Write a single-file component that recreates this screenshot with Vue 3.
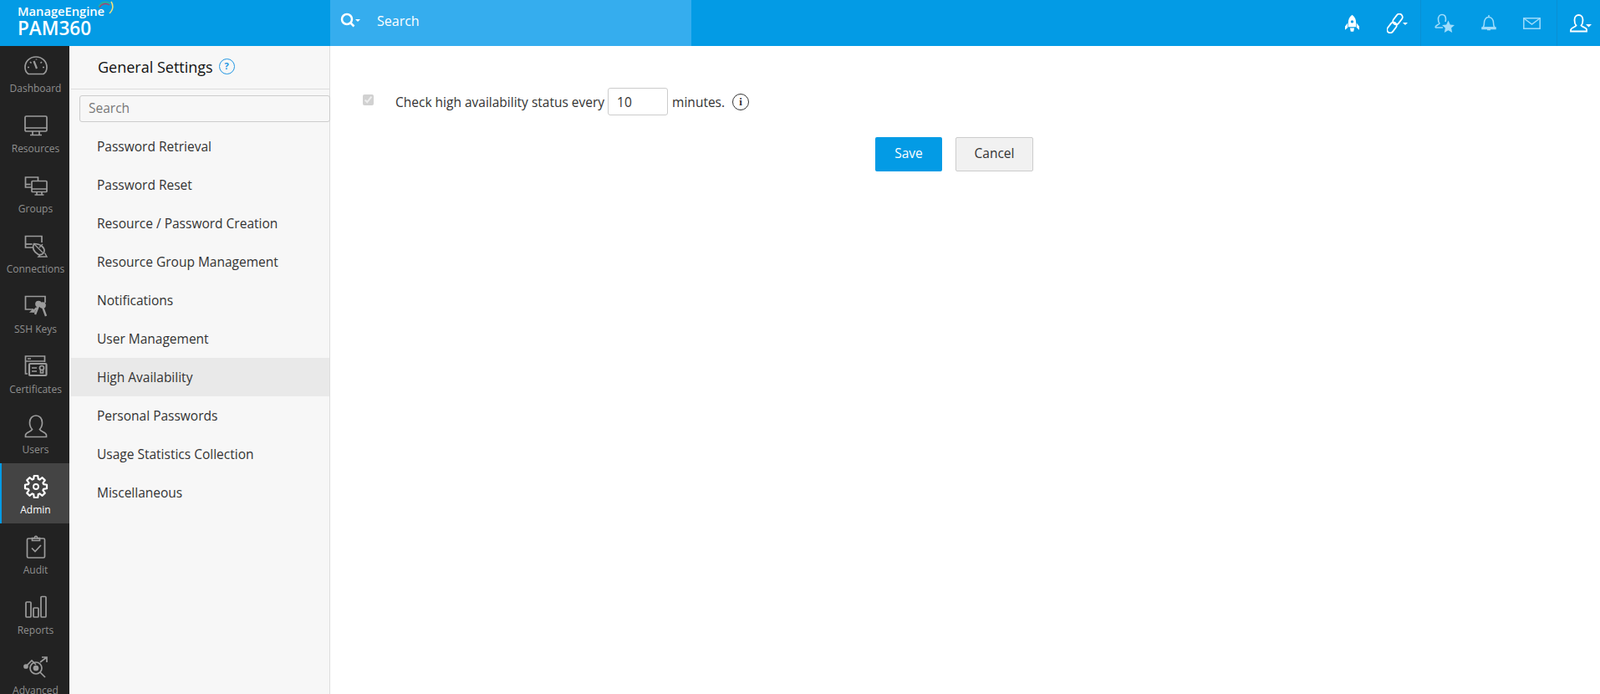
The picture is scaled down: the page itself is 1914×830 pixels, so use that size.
<script setup>
const settings = ['Password Retrieval','Password Reset','Resource / Password Creation','Resource Group Management','Notifications','User Management','High Availability','Personal Passwords','Usage Statistics Collection','Miscellaneous']
const nav = [
 {k:'dashboard',l:'Dashboard'},{k:'resources',l:'Resources'},{k:'groups',l:'Groups'},{k:'connections',l:'Connections'},{k:'ssh',l:'SSH Keys'},{k:'certs',l:'Certificates'},{k:'users',l:'Users'},{k:'admin',l:'Admin',active:true},{k:'audit',l:'Audit'},{k:'reports',l:'Reports'},{k:'advanced',l:'Advanced'}
]
// gear outline: eight teeth around the hub
const gearPath = (() => {
  const pts = []
  const step = Math.PI / 4
  for (let i = 0; i < 8; i++) {
    const a = i * step - Math.PI / 2
    const add = (r, d) => pts.push([(15 + r * Math.cos(a + d)).toFixed(2), (15 + r * Math.sin(a + d)).toFixed(2)].join(' '))
    add(9.5, -0.3); add(13.2, -0.17); add(13.2, 0.17); add(9.5, 0.3)
  }
  return 'M' + pts.join('L') + 'Z'
})()
</script>

<template>
  <div class="app">
    <header class="top">
      <div class="brand">
        <div class="me">ManageEngine<svg class="arc" viewBox="0 0 20 20" width="20" height="20" fill="none"><path d="M2 8C5 2 11 1 16 4" stroke="#35b58a" stroke-width="1.400"/><path d="M3 9C6 4 11 3.500 15 6" stroke="#b9405f" stroke-width="1.300"/><path d="M17 2C20 7 19 12 15 16" stroke="#f6e27a" stroke-width="1.500"/></svg></div>
        <div class="pam">PAM360</div>
      </div>
      <div class="tsearch">
        <svg width="24" height="20" viewBox="0 0 24 20" fill="none" stroke="#fff" stroke-width="2.500"><circle cx="8" cy="8" r="6"/><path d="M12.500 12.500l4 4"/><path d="M18 8h6l-3 3z" fill="#fff" stroke="none"/></svg>
        <span>Search</span>
      </div>
      <div class="ticons">
        <div class="tgroup g1">
          <svg width="17" height="24" viewBox="0 0 20 24" fill="#fff"><path d="M10 0C14 3 15.500 7 15.500 11v6h-11v-6C4.500 7 6 3 10 0z"/><path d="M3.800 11.500L0 16v5l3.800-3zM16.200 11.500L20 16v5l-3.800-3z"/><path d="M7 18.500h6l-1 5H8z"/><circle cx="10" cy="9.500" r="2" fill="#039be5"/></svg>
          <svg width="25" height="24" viewBox="0 0 25 24" fill="none" stroke="#fff" stroke-width="1.800"><rect x="-3.800" y="-7" width="7.600" height="14" rx="3.800" transform="translate(6 17) rotate(38)"/><rect x="-3.800" y="-7" width="7.600" height="14" rx="3.800" transform="translate(13 7) rotate(38)"/><path d="M19 11h6l-3 3z" fill="#fff" stroke="none"/></svg>
        </div>
        <div class="tgroup g2">
          <svg width="24" height="24" viewBox="0 0 24 24" fill="none" stroke="#9fdcfb" stroke-width="1.600"><path d="M1 17c0-3 4-3 5-5-1-1-1.500-3-1.500-5C4.500 3.500 6.500 1.500 9 1.500s4.500 2 4.500 5.500c0 1-.2 2-.5 3M1 17h9"/><path d="M16.500 8.500l2.300 5 5.200.6-3.900 3.500 1.100 5.300-4.700-2.700-4.700 2.700 1.100-5.300-3.900-3.500 5.200-.6z" fill="#9fdcfb" stroke="none"/></svg>
          <svg width="18" height="21" viewBox="0 0 18 21" fill="none" stroke="#9fdcfb" stroke-width="1.500"><path d="M2 16c1.500-2 1.500-3.500 1.500-6S5 3.500 9 3.500s5.500 4 5.500 6.500 0 4 1.500 6z"/><path d="M1 16h16v1.500H1zM7 18.500h4M9 1v2.500"/></svg>
          <svg width="21" height="14" viewBox="0 0 21 14" fill="none" stroke="#9fdcfb" stroke-width="1.500"><rect x=".8" y=".8" width="19.400" height="12.400"/><path d="M1 1l9.500 7L20 1"/></svg>
        </div>
        <div class="tgroup g3">
          <svg width="26" height="22" viewBox="0 0 26 22" fill="none" stroke="#fff" stroke-width="1.800"><path d="M1 20.500v-1.500c0-3 5-3 6.500-5.500C6 12 5.500 9.500 5.500 7 5.500 3.500 7.500 1 10.500 1s5 2.500 5 6c0 2.500-.5 5-2 6.500 1.500 2 6 2.500 6.500 4.500v2.500z"/><path d="M19 12h7l-3.500 3.500z" fill="#fff" stroke="none"/></svg>
        </div>
      </div>
    </header>

    <div class="main">
      <nav class="side">
        <div class="navlist">
          <div v-for="n in nav" :key="n.k" class="nitem" :class="{active:n.active}">
            <svg class="nicon" width="30" height="30" viewBox="0 0 30 30" fill="none" stroke="currentColor" stroke-width="1.700">
              <g v-if="n.k==='dashboard'"><path d="M6 25.500C3 23.500 2 20 2 17.500 2 10.500 7.500 5 15 5s13 5.500 13 12.500c0 3-1 6-4 8z"/><path d="M12.500 10l3.500 9" stroke-width="2.200"/><path d="M5 17.500h2M23 17.500h2M8 11l1.500 1.500M22 11l-1.500 1.500M15.500 7.500v1"/></g>
              <g v-else-if="n.k==='resources'"><rect x="2" y="4" width="26" height="18" rx="1.500"/><path d="M2 18h26M11 22v4M19 22v4M8 26.500h14"/></g>
              <g v-else-if="n.k==='groups'"><path d="M10 17H2.500v-12h15v4"/><path d="M2.500 13.500h6"/><rect x="10" y="9.500" width="18" height="13" rx="1"/><path d="M10 19h18M16 22.500v3M22 22.500v3M13.500 26h11"/></g>
              <g v-else-if="n.k==='connections'"><path d="M11 17H2.500V3.500H22V11"/><path d="M2.500 13h8"/><path d="M12.500 12.500C10.500 17 12 22 18 25.500c3 .5 6-1 7-4 .5-4-4-9-12.500-9z"/><path d="M13 13l10 10M19 17l4-4M20 26l-2 2h10l-2.500-4.500" stroke-width="1.400"/></g>
              <g v-else-if="n.k==='ssh'"><path d="M12 19H2.500V3.500H26V11"/><path d="M12 19l-3 3h5"/><circle cx="18" cy="12.500" r="3" fill="currentColor"/><circle cx="23" cy="14" r="3" fill="currentColor"/><path d="M14 25l4-10M27 27l-4-11M11 22l5-5" stroke-width="2.400"/></g>
              <g v-else-if="n.k==='certs'"><path d="M5 24H2.500V3h23v7"/><path d="M2.500 9h23M5 6h4" /><rect x="7" y="12" width="20.500" height="14" rx="1" stroke-width="2.200"/><path d="M10 17h6M10 21h6"/><circle cx="22" cy="17" r="2.500"/><path d="M20.500 19.500v3.500h3v-3.500"/></g>
              <g v-else-if="n.k==='users'"><path d="M2.500 27.500v-2c0-3.500 6-3.500 8-7-2-2-3-5-3-8 0-5 3-8.500 7.500-8.500s7.500 3.500 7.500 8.500c0 3-1 6-3 8 2 3.500 8 3.500 8 7v2z"/></g>
              <g v-else-if="n.k==='admin'"><path :d="gearPath" stroke-width="2.200" stroke-linejoin="round"/><circle cx="15" cy="15" r="3" stroke-width="1.800"/></g>
              <g v-else-if="n.k==='audit'"><rect x="4.500" y="5" width="21" height="23" rx="1.500"/><path d="M10.500 7.500V4.500h3c0-3 3-3 3 0h3v3z"/><path d="M10 16.500l4 4 7-7.500"/></g>
              <g v-else-if="n.k==='reports'"><rect x="3" y="9" width="6" height="18" rx="1"/><rect x="12" y="16" width="6" height="11" rx="1"/><rect x="21" y="2.500" width="6" height="24.500" rx="1"/></g>
              <g v-else><path d="M3 14l7-7 5 5M20 9l8-6M22 3h6v6"/><circle cx="3" cy="14" r="2" fill="currentColor"/><circle cx="15" cy="16" r="7"/><circle cx="15" cy="16" r="2.500" fill="currentColor"/><path d="M20 21l6 6"/></g>
            </svg>
            <span>{{ n.l }}</span>
          </div>
        </div>
      </nav>

      <aside class="panel">
        <div class="ptitle">General Settings <span class="help">?</span></div>
        <div class="psearch"><input placeholder="Search" /></div>
        <ul class="plist">
          <li v-for="s in settings" :key="s" :class="{sel:s==='High Availability'}">{{ s }}</li>
        </ul>
      </aside>

      <main class="content">
        <div class="row">
          <input class="chk" type="checkbox" checked disabled />
          <span class="lbl">Check high availability status every</span>
          <input class="num" type="text" value="10" />
          <span class="min">minutes.</span>
          <span class="info">i</span>
        </div>
        <div class="actions">
          <button class="save">Save</button>
          <button class="cancel">Cancel</button>
        </div>
      </main>
    </div>
  </div>
</template>

<style>
html, body { margin: 0; height: 100%; overflow: hidden; background: #fff; }
</style>

<style scoped>
.app { width: 1914px; height: 830px; display: flex; flex-direction: column; overflow: hidden; font-family: "Open Sans", "Noto Sans", sans-serif; color: #333; }
.top { height: 55px; flex: none; background: #039be5; display: flex; color: #fff; }
.brand { width: 395px; box-sizing: border-box; padding: 5px 0 0 21px; flex: none; }
.me { font-family: "Open Sans", sans-serif; font-size: 14.700px; line-height: 16px; font-weight: 600; position: relative; color: #fff; }
.arc { position: absolute; left: 95px; top: -5px; }
.pam { font-family: "Open Sans", sans-serif; font-size: 22.500px; line-height: 26px; font-weight: 600; }
.tsearch { width: 432px; background: #35adee; display: flex; align-items: center; gap: 20px; padding: 0 0 5px 12px; box-sizing: border-box; font-size: 16px; }
.ticons { flex: 1; display: flex; justify-content: flex-end; }
.tgroup { display: flex; align-items: center; height: 55px; box-sizing: border-box; }
.g1 { gap: 33px; padding-right: 15px; border-right: 1px solid #0a8fd3; }
.g2 { gap: 32px; padding: 0 19px 0 16px; border-right: 1px solid #0a8fd3; }
.g3 { width: 51px; padding-left: 15px; }
.main { flex: 1; display: flex; min-height: 0; }
.side { width: 83px; flex: none; background: #222; overflow: hidden; }
.navlist { margin-top: -5px; }
.nitem { height: 72px; box-sizing: border-box; padding-top: 13px; display: flex; flex-direction: column; align-items: center; color: #8f8f8f; font-size: 12px; line-height: 16px; border-left: 2px solid transparent; }
.nitem span { margin-top: 5px; white-space: nowrap; }
.nicon { color: #9c9c9c; flex: none; }
.nitem.active { background: #444; border-left-color: #039be5; color: #fff; }
.nitem.active .nicon { color: #fff; }
.panel { width: 312px; flex: none; box-sizing: border-box; background: #f7f7f7; border-right: 1px solid #ddd; border-left: 2px solid #fff; }
.ptitle { height: 52px; box-sizing: border-box; border-bottom: 1px solid #ddd; padding: 0 0 2px 32px; font-size: 18px; line-height: 26px; color: #111; display: flex; align-items: center; gap: 7px; }
.help { width: 19px; height: 19px; box-sizing: border-box; border: 1.500px solid #2196e3; border-radius: 50%; color: #2196e3; font-size: 11px; line-height: 16px; text-align: center; font-weight: 700; }
.psearch { padding: 7px 0 0 10px; }
.psearch input { width: 300px; height: 32px; box-sizing: border-box; border: 1px solid #ccc; border-radius: 3px; background: #f7f7f7; padding: 0 10px 2px; font: 15.500px "Open Sans", sans-serif; outline: none; display: block; }
.psearch input::placeholder { color: #777; opacity: 1; }
.plist { list-style: none; margin: 6px 0 0; padding: 0; }
.plist li { height: 46px; line-height: 46px; padding-left: 31px; font-size: 15.500px; color: #333; }
.plist li.sel { background: #e9e9e9; }
.content { flex: 1; padding: 50px 0 0 39px; min-width: 0; }
.row { display: flex; align-items: center; height: 33px; font-size: 15.500px; color: #333; }
.chk { width: 13px; height: 13px; margin: 0 26px 0 0; position: relative; top: -2px; }
.num { width: 72px; height: 33px; box-sizing: border-box; border: 1px solid #ccc; border-radius: 3px; margin: 0 5px 0 4px; padding: 0 10px; font: 15.500px "Open Sans", sans-serif; color: #333; outline: none; }
.info { width: 20px; height: 20px; box-sizing: border-box; border: 1.500px solid #333; border-radius: 50%; margin-left: 9px; font: 700 13px/17px "Liberation Serif", serif; text-align: center; }
.actions { display: flex; gap: 16px; margin: 26px 0 0 613px; }
.actions button { height: 41px; font: 15.500px "Open Sans", sans-serif; border-radius: 2px; cursor: pointer; padding: 0 0 4px; }
.save { width: 80px; background: #039be5; border: 0; color: #fff; }
.cancel { width: 93px; background: #f1f1f1; border: 1px solid #ccc; color: #333; }
</style>
